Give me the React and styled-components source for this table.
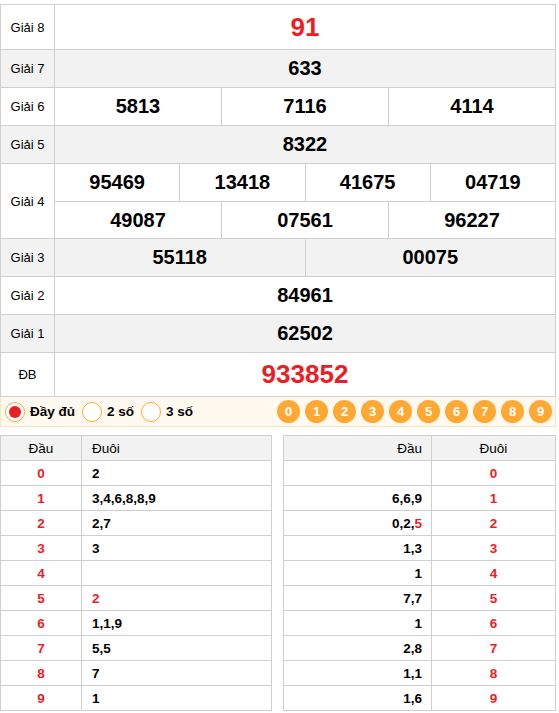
import React from "react";
import styled, { createGlobalStyle } from "styled-components";

const RED = "#ee1c25";
const ORANGE = "#ffa833";
const LINE = "#cfcfcf";
const GRAY = "#f2f2f2";

const Global = createGlobalStyle`
  html, body { margin: 0; padding: 0; background: #fff; }
  body { font-family: "Liberation Sans", Arial, sans-serif; color: #000; }
  * { box-sizing: border-box; }
`;

const Page = styled.div`
  width: 556px;
  padding-top: 4px;
`;

const Board = styled.div`
  border: 1px solid ${LINE};
  border-bottom: none;
`;

const Row = styled.div`
  display: flex;
  border-bottom: 1px solid ${LINE};
  background: ${(p) => (p.$alt ? GRAY : "#fff")};
`;

const Label = styled.div`
  width: 54px;
  flex: none;
  border-right: 1px solid ${LINE};
  display: flex;
  align-items: center;
  justify-content: center;
  font-size: 13px;
`;

const Values = styled.div`
  flex: 1;
  display: flex;
  flex-direction: column;
`;

const SubRow = styled.div`
  display: flex;
  height: ${(p) => p.$h}px;
  & + & {
    border-top: 1px solid ${LINE};
  }
`;

const Cell = styled.div`
  flex: 1;
  display: flex;
  align-items: center;
  justify-content: center;
  font-weight: bold;
  font-size: ${(p) => (p.$big ? 26 : 20)}px;
  color: ${(p) => (p.$big ? RED : "#000")};
  & + & {
    border-left: 1px solid ${LINE};
  }
`;

const Bar = styled.div`
  display: flex;
  align-items: center;
  height: 30px;
  background: #fff9ef;
  border: 1px solid #ffe3bd;
  border-top: none;
  padding: 0 3px 0 4px;
`;

const Radio = styled.label`
  display: flex;
  align-items: center;
  gap: 5px;
  margin-right: 7px;
  font-size: 13.5px;
  font-weight: bold;
`;

const Circle = styled.span`
  width: 20px;
  height: 20px;
  border-radius: 50%;
  border: 1px solid ${ORANGE};
  background: #fff;
  display: flex;
  align-items: center;
  justify-content: center;
  &::after {
    content: "";
    display: ${(p) => (p.$on ? "block" : "none")};
    width: 12px;
    height: 12px;
    border-radius: 50%;
    background: ${RED};
  }
`;

const Balls = styled.div`
  margin-left: auto;
  display: flex;
  gap: 5px;
`;

const Ball = styled.span`
  width: 23px;
  height: 23px;
  border-radius: 50%;
  background: ${ORANGE};
  color: #fff;
  font-weight: bold;
  font-size: 13px;
  display: flex;
  align-items: center;
  justify-content: center;
`;

const Tables = styled.div`
  display: flex;
  justify-content: space-between;
  margin-top: 8px;
`;

const Table = styled.table`
  border-collapse: collapse;
  width: ${(p) => p.$w}px;
  table-layout: fixed;
  font-size: 13.5px;
`;

const Th = styled.th`
  height: 25px;
  padding: 0;
  padding-left: ${(p) => (p.$align === "left" ? 10 : 0)}px;
  padding-right: ${(p) => (p.$align === "right" ? 9 : 0)}px;
  border: 1px solid ${LINE};
  background: ${GRAY};
  font-weight: normal;
  font-size: 13.5px;
  text-align: ${(p) => p.$align || "center"};
  width: ${(p) => (p.$w ? p.$w + "px" : "auto")};
`;

const Td = styled.td`
  height: 25px;
  padding: 0;
  padding-left: ${(p) => (p.$align === "left" ? 10 : 0)}px;
  padding-right: ${(p) => (p.$align === "right" ? 9 : 0)}px;
  border: 1px solid ${LINE};
  font-weight: bold;
  text-align: ${(p) => p.$align || "center"};
  color: ${(p) => (p.$red ? RED : "#000")};
`;

const Hot = styled.span`
  color: ${RED};
`;

const prizes = [
  { label: "Giải 8", rows: [["91"]], big: true, h: 44 },
  { label: "Giải 7", rows: [["633"]], h: 37 },
  { label: "Giải 6", rows: [["5813", "7116", "4114"]], h: 37 },
  { label: "Giải 5", rows: [["8322"]], h: 37 },
  { label: "Giải 4", rows: [["95469", "13418", "41675", "04719"], ["49087", "07561", "96227"]], h: 37 },
  { label: "Giải 3", rows: [["55118", "00075"]], h: 37 },
  { label: "Giải 2", rows: [["84961"]], h: 37 },
  { label: "Giải 1", rows: [["62502"]], h: 37 },
  { label: "ĐB", rows: [["933852"]], big: true, h: 43 },
];

const dau = ["2", "3,4,6,8,8,9", "2,7", "3", "", "2", "1,1,9", "5,5", "7", "1"];
const duoi = ["", "6,6,9", "0,2,5", "1,3", "1", "7,7", "1", "2,8", "1,1", "1,6"];

function renderList(s, hot, hotChar) {
  if (!hot) return s;
  const parts = s.split(",");
  return parts.map((d, i) => (
    <React.Fragment key={i}>
      {i > 0 && ","}
      {d === hotChar && i === parts.length - 1 ? <Hot>{d}</Hot> : d}
    </React.Fragment>
  ));
}

export default function App() {
  return (
    <Page>
      <Global />
      <Board>
        {prizes.map((p, i) => (
          <Row key={p.label} $alt={i % 2 === 1}>
            <Label>{p.label}</Label>
            <Values>
              {p.rows.map((r, j) => (
                <SubRow key={j} $h={p.h}>
                  {r.map((n) => (
                    <Cell key={n} $big={p.big}>
                      {n}
                    </Cell>
                  ))}
                </SubRow>
              ))}
            </Values>
          </Row>
        ))}
      </Board>
      <Bar>
        <Radio>
          <Circle $on />
          Đầy đủ
        </Radio>
        <Radio>
          <Circle />2 số
        </Radio>
        <Radio>
          <Circle />3 số
        </Radio>
        <Balls>
          {Array.from({ length: 10 }, (_, i) => (
            <Ball key={i}>{i}</Ball>
          ))}
        </Balls>
      </Bar>
      <Tables>
        <Table $w={272}>
          <thead>
            <tr>
              <Th $w={81}>Đầu</Th>
              <Th $align="left">Đuôi</Th>
            </tr>
          </thead>
          <tbody>
            {dau.map((v, i) => (
              <tr key={i}>
                <Td $red>{i}</Td>
                <Td $align="left" $red={i === 5}>
                  {v}
                </Td>
              </tr>
            ))}
          </tbody>
        </Table>
        <Table $w={273}>
          <thead>
            <tr>
              <Th $align="right" $w={148}>
                Đầu
              </Th>
              <Th>Đuôi</Th>
            </tr>
          </thead>
          <tbody>
            {duoi.map((v, i) => (
              <tr key={i}>
                <Td $align="right">{renderList(v, i === 2, "5")}</Td>
                <Td $red>{i}</Td>
              </tr>
            ))}
          </tbody>
        </Table>
      </Tables>
    </Page>
  );
}
